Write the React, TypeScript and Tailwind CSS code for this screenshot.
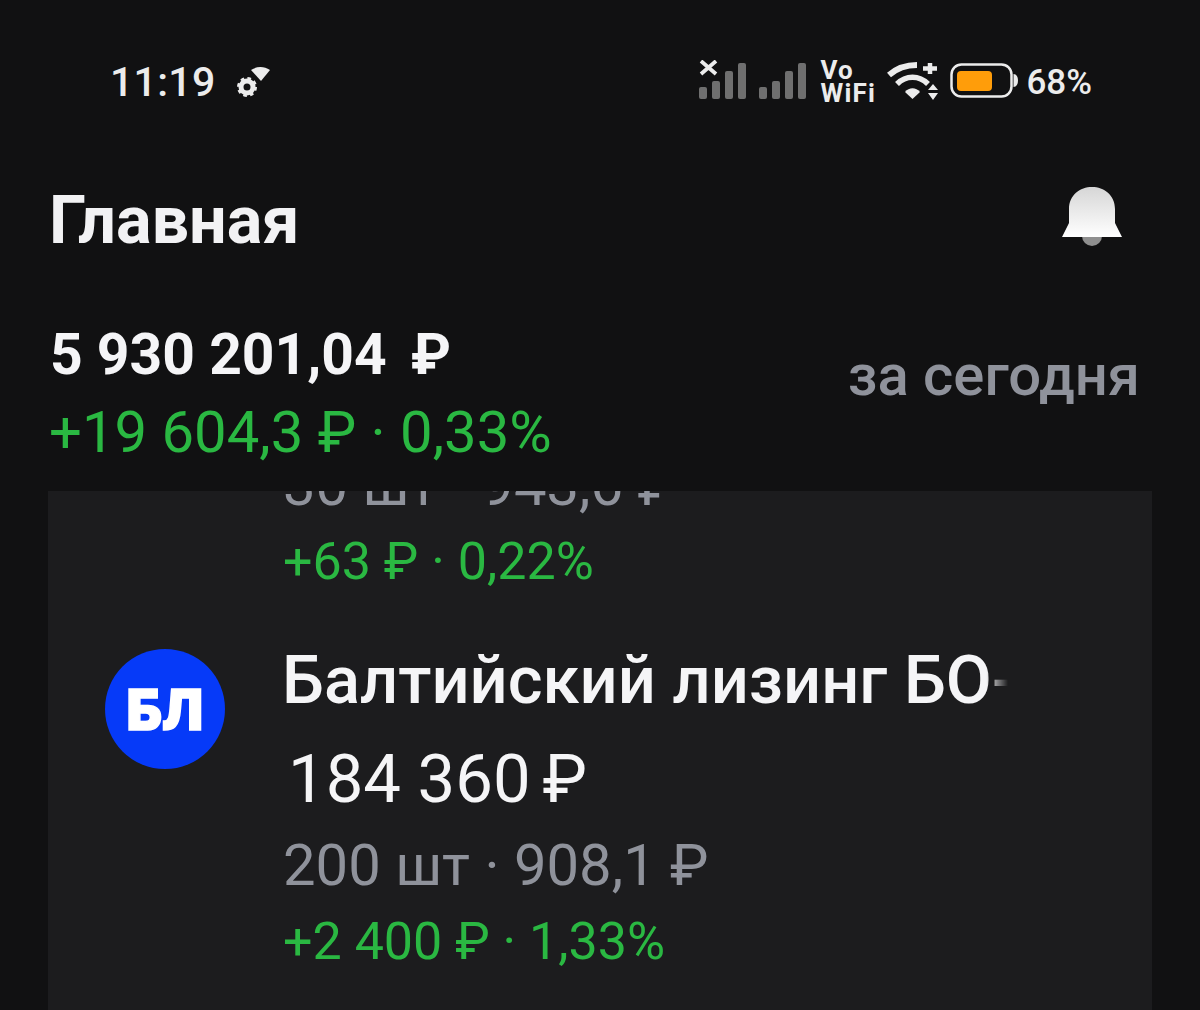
import React from 'react';

const SignalBars = ({ withCross }: { withCross?: boolean }) => (
  <svg width="48" height="44" viewBox="0 0 48 44" className="block">
    {withCross && (
      <path d="M3 1l15 13M18 1L3 14" stroke="#ececec" strokeWidth="3.800" fill="none" />
    )}
    <rect x="1" y="27" width="8" height="12" rx="2" fill="#6f6f6f" />
    <rect x="14" y="21" width="8" height="18" rx="2" fill="#6f6f6f" />
    <rect x="27" y="11" width="8" height="28" rx="2" fill="#6f6f6f" />
    <rect x="40" y="3" width="8" height="36" rx="2" fill="#6f6f6f" />
  </svg>
);

const WifiIcon = () => (
  <svg width="52" height="44" viewBox="0 0 52 44" className="block">
    <path d="M3 15C11 8 20 5 31 5" stroke="#ececec" strokeWidth="6" fill="none" />
    <path d="M11 24C20 15 33 15 42 24" stroke="#ececec" strokeWidth="5.500" fill="none" />
    <path d="M19 32C23 27 30 27 34 32L26.500 39z" fill="#ececec" />
    <path d="M44 3v11M37 8.500h14" stroke="#ececec" strokeWidth="4.500" fill="none" />
    <path d="M47 24l5 6H42zM47 40l5-7H42z" fill="#ececec" />
  </svg>
);

const BatteryIcon = () => (
  <svg width="68" height="44" viewBox="0 0 68 44" className="block">
    <rect x="1.500" y="4.500" width="60" height="32" rx="10" stroke="#ececec" strokeWidth="2.500" fill="none" />
    <rect x="7" y="11" width="35" height="20" rx="4" fill="#ff9d0a" />
    <path d="M63.500 14c3 0 4.500 3 4.500 6.500s-1.500 6.500-4.500 6.500z" fill="#ececec" />
  </svg>
);

const BellIcon = () => (
  <svg width="60" height="60" viewBox="0 0 60 60" className="mb-[6px] block">
    <defs>
      <linearGradient id="bell-fill" x1="0" y1="0" x2="0" y2="1">
        <stop offset="0" stopColor="#d6d6d6" />
        <stop offset="1" stopColor="#ffffff" />
      </linearGradient>
    </defs>
    <circle cx="30" cy="49" r="10" fill="#8f8f8f" />
    <path d="M7 36V22C7 8 18 0 30 0s23 8 23 22v14l7 14H0z" fill="url(#bell-fill)" />
  </svg>
);

export default function App() {
  return (
    <div className="flex h-[1010px] w-[1200px] flex-col overflow-hidden bg-[#111112] font-['Roboto',sans-serif]">
      {/* status bar */}
      <div className="flex h-[164px] shrink-0 items-center justify-between pl-[110px] pr-[108px]">
        <div className="flex items-center gap-[21px]">
          <span className="text-[41px] font-medium leading-none tracking-[0.3px] text-[#ececec]">11:19</span>
          <svg width="34" height="32" viewBox="0 0 34 32" className="block">
            <path d="M14 4C20 0 27 0 33 4L24 15z" fill="#ececec" />
            <circle cx="10" cy="21" r="6" stroke="#ececec" strokeWidth="5" fill="none" />
            <circle cx="10" cy="21" r="8.500" stroke="#ececec" strokeWidth="3" strokeDasharray="3.500 3.200" fill="none" />
          </svg>
        </div>
        <div className="flex items-center">
          <SignalBars withCross />
          <div className="ml-[12px]">
            <SignalBars />
          </div>
          <div className="ml-[14px] flex w-[56px] flex-col text-[26px] font-bold leading-[23px] tracking-[1.2px] text-[#ececec]">
            <span>Vo</span>
            <span>WiFi</span>
          </div>
          <div className="ml-[10px]">
            <WifiIcon />
          </div>
          <div className="ml-[12px]">
            <BatteryIcon />
          </div>
          <span className="ml-[8px] text-[35px] font-medium leading-none text-[#ececec]">68%</span>
        </div>
      </div>

      {/* title */}
      <div className="flex h-[112px] shrink-0 items-center justify-between pl-[49px] pr-[78px]">
        <h1 className="text-[66.500px] font-bold leading-none text-[#f2f2f4]">Главная</h1>
        <BellIcon />
      </div>

      {/* portfolio total */}
      <div className="flex h-[215px] shrink-0 items-start justify-between pl-[49px] pr-[60px] pt-[45px]">
        <div className="flex flex-col">
          <div className="ml-[1px] flex h-[66px] items-center text-[57px] font-bold leading-none text-[#f5f5f7]">
            5 930 201,04 <span className="ml-[24px]">₽</span>
          </div>
          <div className="mt-[12px] flex h-[66px] items-center text-[58px] leading-none text-[#2ab842]">
            +19 604,3 ₽ · 0,33%
          </div>
        </div>
        <div className="mt-[21px] flex h-[66px] items-center text-[58px] font-medium leading-none text-[#8f929b]">
          за сегодня
        </div>
      </div>

      {/* positions card */}
      <div className="mx-[48px] flex flex-1 flex-col overflow-hidden bg-[#1c1c1e] pl-[57px]">
        <div className="ml-[178px] mt-[-39px] flex h-[66px] items-center text-[58px] leading-none text-[#8f929b]">
          30 шт · 943,6 ₽
        </div>
        <div className="ml-[178px] mt-[13px] flex h-[62px] items-center text-[52px] leading-none text-[#2ab842]">
          +63 ₽ · 0,22%
        </div>
        <div className="mt-[56px] flex items-start gap-[58px]">
          <div className="flex h-[120px] w-[120px] shrink-0 items-center justify-center rounded-full bg-[#063af8]">
            <span className="origin-center scale-x-[0.96] font-['Inter',sans-serif] text-[57px] font-black leading-none text-white [-webkit-text-stroke:1.5px_white]">
              БЛ
            </span>
          </div>
          <div className="flex min-w-0 flex-col">
            <div className="ml-[-1px] w-[726px] overflow-hidden whitespace-nowrap text-[66.800px] font-medium leading-[62px] text-[#f5f5f7] [mask-image:linear-gradient(to_right,black_97%,transparent)]">
              Балтийский лизинг БО-001Р
            </div>
            <div className="ml-[5px] mt-[37px] flex h-[62px] items-center text-[67px] leading-none text-[#f5f5f7]">
              184 360<span className="ml-[12px]">₽</span>
            </div>
            <div className="mt-[22px] flex h-[66px] items-center text-[58px] leading-none text-[#8f929b]">
              200 шт · 908,1 ₽
            </div>
            <div className="mt-[13px] flex h-[62px] items-center text-[52px] leading-none text-[#2ab842]">
              +2 400 ₽ · 1,33%
            </div>
          </div>
        </div>
      </div>
    </div>
  );
}
